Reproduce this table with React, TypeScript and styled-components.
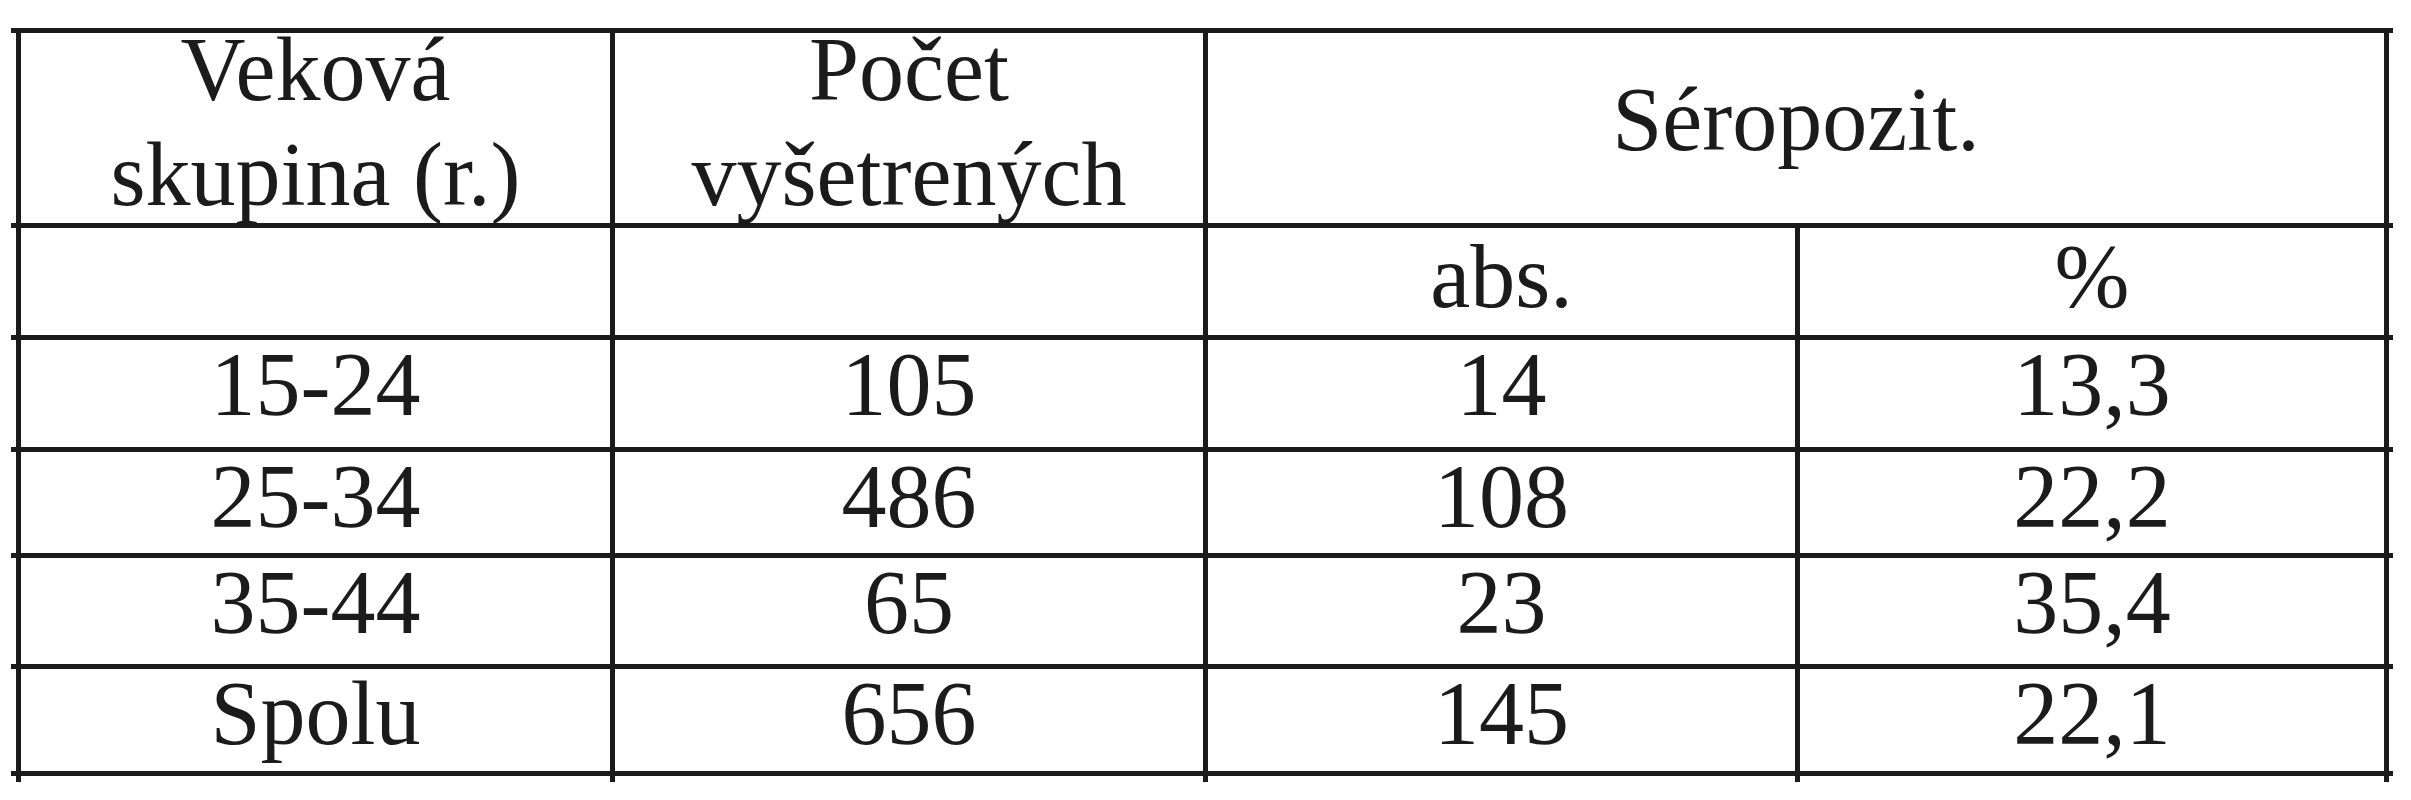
import React from "react";
import styled, { createGlobalStyle } from "styled-components";

const GlobalStyle = createGlobalStyle`
  html, body {
    margin: 0;
    padding: 0;
    background: #ffffff;
  }
`;

const INK = "#1b1b1b";
const RULE = 5;

const rows = [
  { age: "15-24", tested: "105", abs: "14", pct: "13,3", height: 107 },
  { age: "25-34", tested: "486", abs: "108", pct: "22,2", height: 101 },
  { age: "35-44", tested: "65", abs: "23", pct: "35,4", height: 106 },
  { age: "Spolu", tested: "656", abs: "145", pct: "22,1", height: 102 },
];

export default function App(): React.ReactElement {
  return (
    <Page>
      <GlobalStyle />
      <Table>
        <Row $height={190} $first>
          <Cell>
            <Text $shift={-16}>
              Veková
              <br />
              skupina (r.)
            </Text>
          </Cell>
          <Cell>
            <Text $shift={-16}>
              Počet
              <br />
              vyšetrených
            </Text>
          </Cell>
          <Cell $span={2}>
            <Text $shift={34}>Séropozit.</Text>
          </Cell>
        </Row>
        <Row $height={107}>
          <Cell />
          <Cell />
          <Cell>
            <Text $shift={-4}>abs.</Text>
          </Cell>
          <Cell>
            <Text $shift={-4}>%</Text>
          </Cell>
        </Row>
        {rows.map((r) => (
          <Row key={r.age} $height={r.height}>
            <Cell>
              <Text $shift={-8}>{r.age}</Text>
            </Cell>
            <Cell>
              <Text $shift={-8}>{r.tested}</Text>
            </Cell>
            <Cell>
              <Text $shift={-8}>{r.abs}</Text>
            </Cell>
            <Cell>
              <Text $shift={-8}>{r.pct}</Text>
            </Cell>
          </Row>
        ))}
        {/* the vertical rules run a little past the bottom line */}
        <Row $height={6} $open>
          <Cell />
          <Cell />
          <Cell />
          <Cell />
        </Row>
      </Table>
    </Page>
  );
}

const Page = styled.div`
  padding: 28px 0 0 11px;
  font-family: "Liberation Serif", "DejaVu Serif", serif;
  color: ${INK};
`;

const Table = styled.div`
  display: flex;
  flex-direction: column;
  width: 2382px;
`;

const Row = styled.div<{ $height: number; $first?: boolean; $open?: boolean }>`
  display: grid;
  grid-template-columns: 599px 593px 592px 589px;
  height: ${(p) => p.$height}px;
  padding: 0 4px 0 5px;
  border-top: ${(p) => (p.$first ? `${RULE}px solid ${INK}` : "none")};
  border-bottom: ${(p) => (p.$open ? "none" : `${RULE}px solid ${INK}`)};
`;

const Cell = styled.div<{ $span?: number }>`
  box-sizing: border-box;
  grid-column: span ${(p) => p.$span ?? 1};
  display: flex;
  justify-content: center;
  align-items: flex-start;
  border-right: ${RULE}px solid ${INK};

  &:first-child {
    border-left: ${RULE}px solid ${INK};
  }
`;

const Text = styled.div<{ $shift: number }>`
  margin-top: ${(p) => p.$shift}px;
  font-size: 90px;
  line-height: 105px;
  text-align: center;
  white-space: nowrap;
`;
